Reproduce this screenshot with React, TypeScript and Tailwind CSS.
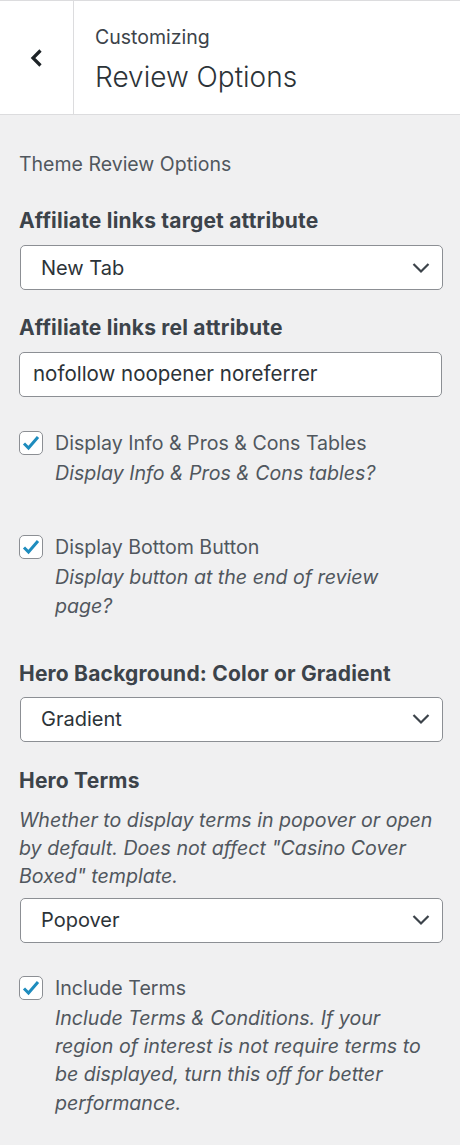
import { useState } from "react";

const font = { fontFamily: 'Inter, "Noto Sans", sans-serif' };

function Chevron() {
  return (
    <svg width="18" height="12" viewBox="0 0 18 12" className="shrink-0">
      <path d="M1.5 2 L9 9.5 L16.5 2" fill="none" stroke="#3c434a" strokeWidth="2.2" />
    </svg>
  );
}

function Select({ value }: { value: string }) {
  return (
    <div className="flex h-[45px] w-[423px] items-center justify-between rounded-[5px] border border-[#8c8f94] bg-white pl-[20px] pr-[12px] text-[20px] text-[#2c3338]">
      <span>{value}</span>
      <Chevron />
    </div>
  );
}

function Check({ label, desc }: { label: string; desc: string[] }) {
  const [on, setOn] = useState(true);
  return (
    <div className="flex items-start gap-[12px]">
      <button
        type="button"
        onClick={() => setOn(!on)}
        className="flex h-[24px] w-[24px] shrink-0 items-center justify-center rounded-[5px] border border-[#8c8f94] bg-white"
      >
        {on && (
          <svg width="18" height="16" viewBox="0 0 18 16">
            <path d="M2 8.5 L6.5 13 L16 2" fill="none" stroke="#1e8cbe" strokeWidth="3" />
          </svg>
        )}
      </button>
      <div>
        <div className="text-[19.6px] leading-[25px] text-[#50575e]">{label}</div>
        <div className="mt-[3px] text-[19.6px] italic leading-[28.3px] text-[#50575e]">
          {desc.map((d) => (
            <div key={d}>{d}</div>
          ))}
        </div>
      </div>
    </div>
  );
}

function Heading({ children }: { children: string }) {
  return <div className="text-[21px] font-bold leading-[26px] tracking-[0.2px] text-[#3c434a]">{children}</div>;
}

export default function App() {
  return (
    <div style={font} className="min-h-[1145px] w-[460px] bg-[#f0f0f1]">
      <div className="flex h-[115px] border-t border-b border-[#dcdcde] bg-white">
        <div className="flex w-[74px] items-center justify-center border-r border-[#dcdcde]">
          <svg width="16" height="22" viewBox="0 0 16 22" className="mr-[2px]">
            <path d="M12.5 3.5 L5 11 L12.5 18.5" fill="none" stroke="#1d2327" strokeWidth="3.2" />
          </svg>
        </div>
        <div className="flex flex-col pl-[21px] pt-[23px]">
          <span className="text-[19.5px] leading-[26px] text-[#3c434a]">Customizing</span>
          <span className="mt-[10px] text-[28px] font-light leading-[34px] text-[#2c3338]">Review Options</span>
        </div>
      </div>

      <div className="px-[19px] pt-[36px]">
        <div className="text-[19.5px] leading-[26px] text-[#50575e]">Theme Review Options</div>

        <div className="mt-[31px]">
          <Heading>Affiliate links target attribute</Heading>
          <div className="mt-[11px] pl-[1px]">
            <Select value="New Tab" />
          </div>
        </div>

        <div className="mt-[25px]">
          <Heading>Affiliate links rel attribute</Heading>
          <div className="mt-[11px] flex h-[45px] w-[423px] items-center rounded-[5px] border border-[#8c8f94] bg-white pl-[13px] text-[20.5px] text-[#2c3338]">
            nofollow noopener noreferrer
          </div>
        </div>

        <div className="mt-[34px]">
          <Check label="Display Info & Pros & Cons Tables" desc={["Display Info & Pros & Cons tables?"]} />
        </div>

        <div className="mt-[48px]">
          <Check label="Display Bottom Button" desc={["Display button at the end of review", "page?"]} />
        </div>

        <div className="mt-[41px]">
          <Heading>Hero Background: Color or Gradient</Heading>
          <div className="mt-[10px] pl-[1px]">
            <Select value="Gradient" />
          </div>
        </div>

        <div className="mt-[26px]">
          <Heading>Hero Terms</Heading>
          <div className="mt-[12px] text-[19.6px] italic leading-[28px] text-[#50575e]">
            <div>Whether to display terms in popover or open</div>
            <div>by default. Does not affect "Casino Cover</div>
            <div>Boxed" template.</div>
          </div>
          <div className="mt-[8px] pl-[1px]">
            <Select value="Popover" />
          </div>
        </div>

        <div className="mt-[33px]">
          <Check
            label="Include Terms"
            desc={[
              "Include Terms & Conditions. If your",
              "region of interest is not require terms to",
              "be displayed, turn this off for better",
              "performance.",
            ]}
          />
        </div>
      </div>
    </div>
  );
}
